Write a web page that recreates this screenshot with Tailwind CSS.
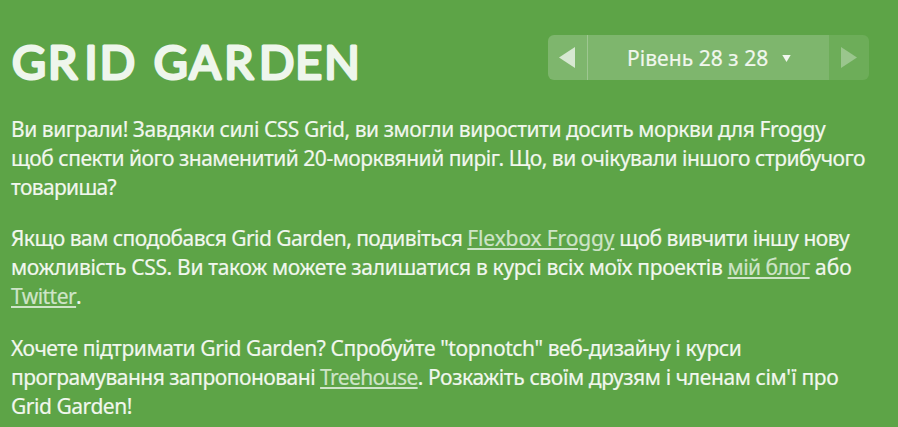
<!DOCTYPE html>
<html lang="uk">
<head>
<meta charset="utf-8">
<title>Grid Garden</title>
<script src="https://cdn.jsdelivr.net/npm/@tailwindcss/browser@4"></script>
</head>
<body class="h-[427px] overflow-hidden bg-[#5da447] pl-[11px] pr-[29px] pt-[35px] font-['Noto_Sans',sans-serif] text-[21px] leading-[29px] text-[#f1f7ee] [-webkit-text-stroke:0.2px]">
  <header class="flex h-[45px] items-start justify-between">
    <h1>
      <svg class="block overflow-visible" width="352" height="50" viewBox="0 0 352 50">
        <text y="43.9" x="0.9 37 73.5 88.7 120 142.7 178.2 213.3 247.9 284.2 313.2" font-family="Lato, sans-serif" font-weight="400" font-size="46.5" fill="#eef6ec" stroke="#eef6ec" stroke-width="3" stroke-linejoin="round">GRID GARDEN</text>
      </svg>
    </h1>
    <nav class="flex h-[45px] w-[321px] overflow-hidden rounded-md">
      <button class="flex w-10 items-center border-r border-[#9ec791] bg-[#7eb66d] pl-[11px]">
        <svg class="block" width="16" height="21" viewBox="0 0 16 21"><path d="M16 0v21L0 10.5z" fill="#d7e8d2"/></svg>
      </button>
      <button class="flex w-[241px] items-center bg-[#7eb66d] pl-[39px]">
        <span class="whitespace-nowrap pt-0.5 tracking-[0.05px]">Рівень 28 з 28</span>
        <svg class="ml-[14px] mt-px block" width="9" height="7" viewBox="0 0 9 7"><path d="M0.3 0h8.4L4.5 7z" fill="#f1f7ee"/></svg>
      </button>
      <button class="flex w-10 items-center bg-[#6dad59] pl-3">
        <svg class="block" width="16" height="21" viewBox="0 0 16 21"><path d="M0 0v21l16-10.5z" fill="#9ac68d"/></svg>
      </button>
    </nav>
  </header>

  <main class="mt-[35px] whitespace-nowrap">
    <p>
      <span class="tracking-[-0.44px]">Ви виграли! Завдяки силі CSS Grid, ви змогли виростити досить моркви для Froggy</span><br>
      <span class="tracking-[-0.49px]">щоб спекти його знаменитий 20-морквяний пиріг. Що, ви очікували іншого стрибучого</span><br>
      <span class="tracking-[-0.65px]">товариша?</span>
    </p>
    <p class="mt-[22px]">
      <span class="tracking-[-0.53px]">Якщо вам сподобався Grid Garden, подивіться </span><a class="tracking-[-0.14px] text-[#cee4c8] underline decoration-2 underline-offset-2">Flexbox Froggy</a><span class="tracking-[-0.52px]"> щоб вивчити іншу нову</span><br>
      <span class="tracking-[-0.32px]">можливість CSS. Ви також можете залишатися в курсі всіх моїх проектів </span><a class="tracking-[-0.57px] text-[#cee4c8] underline decoration-2 underline-offset-2">мій блог</a><span> або</span><br>
      <a class="tracking-[-0.54px] text-[#cee4c8] underline decoration-2 underline-offset-2">Twitter</a>.
    </p>
    <p class="mt-[23px]">
      <span class="tracking-[-0.4px]">Хочете підтримати Grid Garden? Спробуйте "topnotch" веб-дизайну і курси</span><br>
      <span class="tracking-[-0.5px]">програмування запропоновані </span><a class="tracking-[-0.62px] text-[#cee4c8] underline decoration-2 underline-offset-2">Treehouse</a><span class="tracking-[-0.38px]">. Розкажіть своїм друзям і членам сім'ї про</span><br>
      <span class="tracking-[-0.46px]">Grid Garden!</span>
    </p>
  </main>
</body>
</html>
